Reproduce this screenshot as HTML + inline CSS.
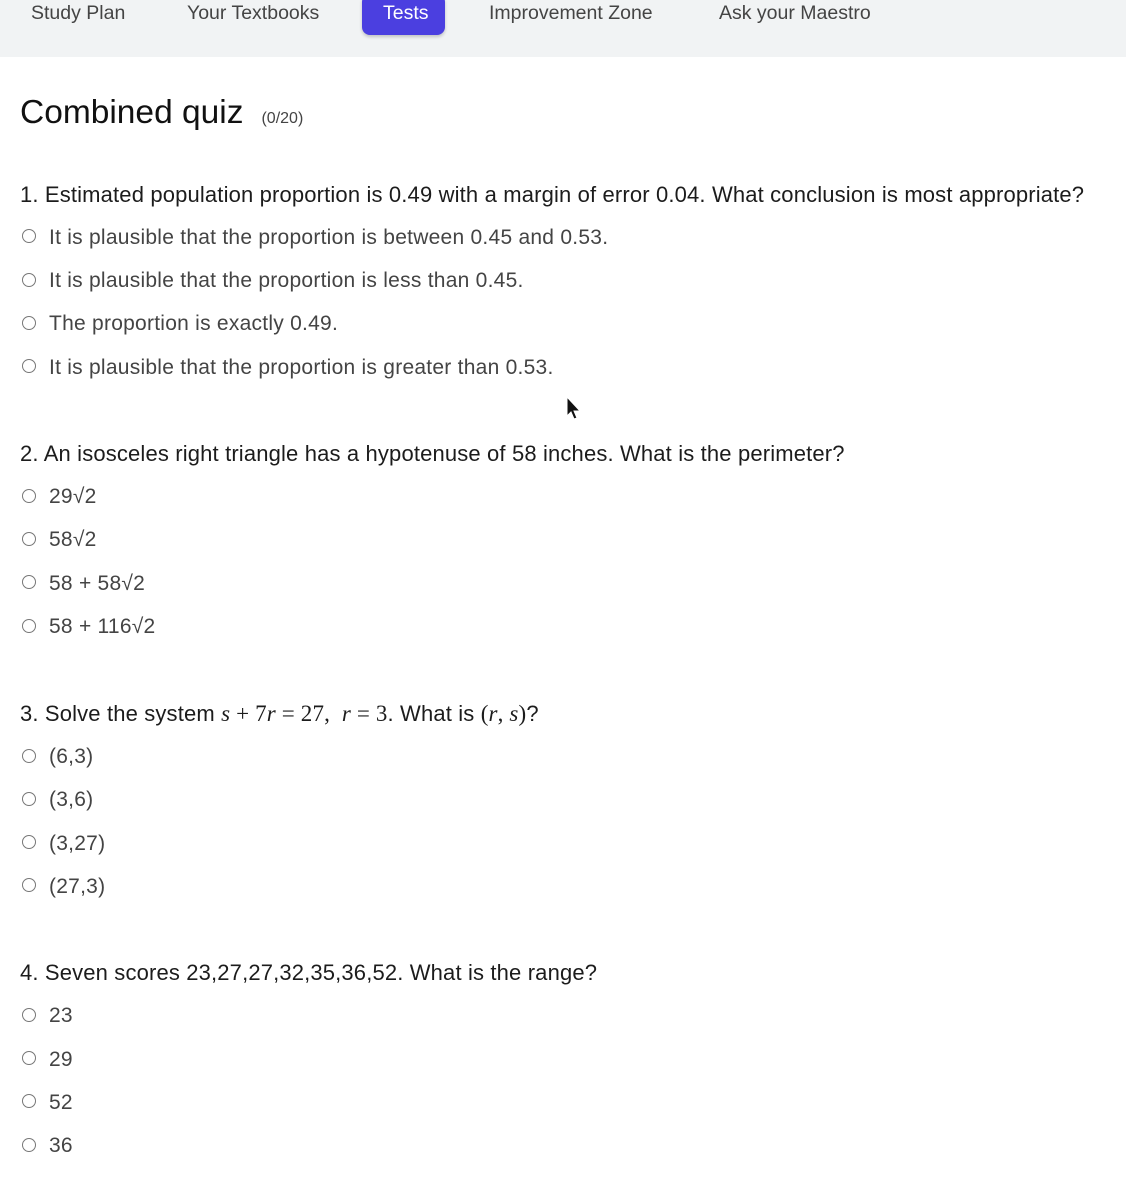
<!DOCTYPE html>
<html><head><meta charset="utf-8"><style>
body{margin:0;width:1126px;height:1188px;background:#fff;font-family:"Liberation Sans",sans-serif;position:relative;overflow:hidden}
.nav{position:absolute;left:0;top:0;width:1126px;height:57px;background:#f1f3f4}
.nav span{position:absolute;top:2px;font-size:19.5px;color:#444;white-space:nowrap}
.pill{position:absolute;left:362px;top:-6px;width:83px;height:41px;background:#4b3fe0;border-radius:8px;box-shadow:0 2px 3px rgba(0,0,0,.2)}
h1{position:absolute;left:20px;top:94px;margin:0;font-weight:normal;font-size:33.5px;color:#111;white-space:nowrap}
h1 small{font-size:16px;color:#444;margin-left:18px}
.q{position:absolute;left:20px;font-size:22px;letter-spacing:.15px;color:#1c1c1c;white-space:nowrap;line-height:24px}
.o{position:absolute;left:49px;font-size:21px;letter-spacing:.25px;color:#444;white-space:nowrap;line-height:24px}
.r{position:absolute;left:22px;width:12px;height:12px;border:1.5px solid #777;border-radius:50%}
.m{font-family:"Liberation Serif",serif;font-size:23px}
</style></head><body>
<div class="nav">
<span style="left:31px">Study Plan</span>
<span style="left:187px">Your Textbooks</span>
<div class="pill"></div>
<span style="left:383px;color:#fff">Tests</span>
<span style="left:489px">Improvement Zone</span>
<span style="left:719px">Ask your Maestro</span>
</div>
<h1>Combined quiz<small>(0/20)</small></h1>

<div class="q" style="top:183px">1. Estimated population proportion is 0.49 with a margin of error 0.04. What conclusion is most appropriate?</div>
<div class="r" style="top:229px"></div><div class="o" style="top:226px">It is plausible that the proportion is between 0.45 and 0.53.</div>
<div class="r" style="top:273px"></div><div class="o" style="top:269px">It is plausible that the proportion is less than 0.45.</div>
<div class="r" style="top:316px"></div><div class="o" style="top:312px">The proportion is exactly 0.49.</div>
<div class="r" style="top:359px"></div><div class="o" style="top:356px">It is plausible that the proportion is greater than 0.53.</div>

<svg style="position:absolute;left:566px;top:396px" width="16" height="26" viewBox="0 0 16 26"><path d="M1 1 L1 20 L5 16 L8 23 L11 22 L8 15 L14 15 Z" fill="#111" stroke="#fff" stroke-width="1"/></svg>

<div class="q" style="top:442px">2. An isosceles right triangle has a hypotenuse of 58 inches. What is the perimeter?</div>
<div class="r" style="top:489px"></div><div class="o" style="top:485px">29√2</div>
<div class="r" style="top:532px"></div><div class="o" style="top:528px">58√2</div>
<div class="r" style="top:575px"></div><div class="o" style="top:572px">58 + 58√2</div>
<div class="r" style="top:619px"></div><div class="o" style="top:615px">58 + 116√2</div>

<div class="q" style="top:702px">3. Solve the system <span class="m"><i>s</i> + 7<i>r</i> = 27,&nbsp; <i>r</i> = 3</span>. What is <span class="m">(<i>r</i>, <i>s</i>)</span>?</div>
<div class="r" style="top:749px"></div><div class="o" style="top:745px">(6,3)</div>
<div class="r" style="top:792px"></div><div class="o" style="top:788px">(3,6)</div>
<div class="r" style="top:835px"></div><div class="o" style="top:832px">(3,27)</div>
<div class="r" style="top:878px"></div><div class="o" style="top:875px">(27,3)</div>

<div class="q" style="top:961px">4. Seven scores 23,27,27,32,35,36,52. What is the range?</div>
<div class="r" style="top:1008px"></div><div class="o" style="top:1004px">23</div>
<div class="r" style="top:1051px"></div><div class="o" style="top:1048px">29</div>
<div class="r" style="top:1094px"></div><div class="o" style="top:1091px">52</div>
<div class="r" style="top:1138px"></div><div class="o" style="top:1134px">36</div>
</body></html>
